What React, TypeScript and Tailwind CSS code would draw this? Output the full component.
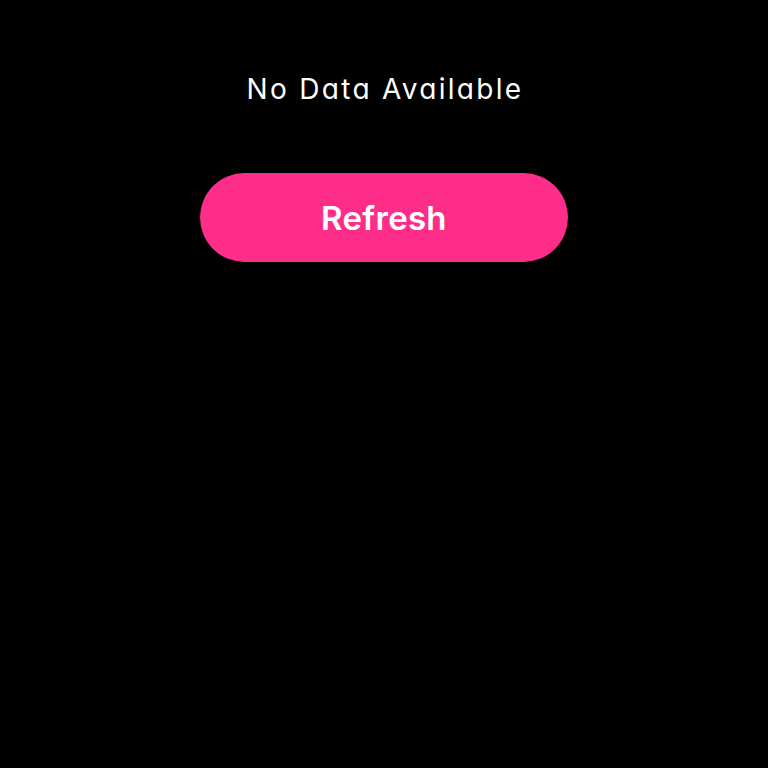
export default function App() {
  return (
    <div
      className="w-full min-h-[768px] bg-black flex flex-col items-center pt-[71px] [font-feature-settings:'cv11']"
      style={{ fontFamily: "Inter, 'Noto Sans', sans-serif" }}
    >
      <p className="text-[28px] leading-[36px] text-white tracking-[2.3px] pl-[2px]">No Data Available</p>
      <button className="mt-[66px] w-[368px] h-[89px] rounded-full bg-[#ff2d8a] text-white text-[33px] font-semibold pt-[3px] tracking-[0.3px]">
        Refresh
      </button>
    </div>
  );
}
